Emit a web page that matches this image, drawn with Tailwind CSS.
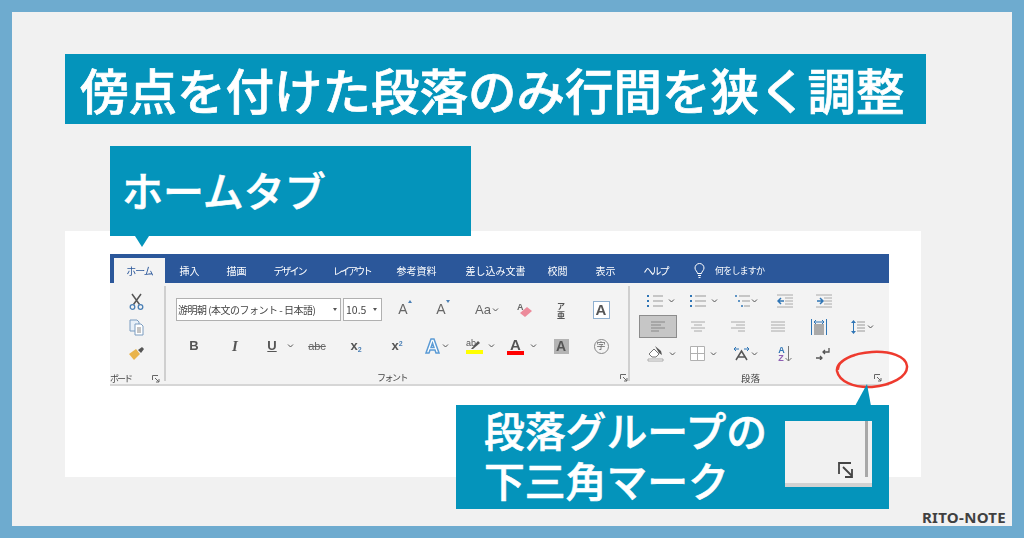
<!DOCTYPE html>
<html lang="ja">
<head>
  <meta charset="UTF-8">
  <title>段落グループの下三角マーク</title>
  <script src="https://cdn.jsdelivr.net/npm/@tailwindcss/browser@4"></script>
</head>
<body class="w-[1024px] h-[538px] overflow-hidden bg-[#6eabcf] p-3 font-['Noto_Sans_CJK_JP','Noto_Sans',sans-serif]">
  <div class="relative h-[514px] w-[1000px] bg-[#f1f1f1] pt-[42px]">

    <!-- Title -->
    <h1 class="ml-[53px] flex h-[70px] w-[861px] items-center bg-[#0494bb] pl-[15px] text-[48.5px] font-medium whitespace-nowrap text-white [-webkit-text-stroke:0.7px_#fff]">傍点を付けた段落のみ行間を狭く調整</h1>

    <!-- Home tab callout -->
    <div class="relative z-10 mt-[22px] ml-[98px] flex h-[90px] w-[361px] items-center bg-[#0494bb] pb-[2px] pl-[12px] text-[41px] font-medium text-white [-webkit-text-stroke:0.6px_#fff]">
      ホームタブ
      <div class="absolute top-[90px] left-[25px] h-0 w-0 border-t-[11px] border-r-[7px] border-l-[7px] border-t-[#0494bb] border-r-transparent border-l-transparent"></div>
    </div>

    <!-- White panel with ribbon -->
    <div class="relative -mt-[5px] ml-[53px] h-[246px] w-[856px] bg-white pt-[23px] pl-[45px]">
      <div class="w-[779px] blur-[0.35px]">
        <!-- Tabs -->
        <div class="flex h-[29px] items-end bg-[#2b579a] pl-[4px] text-[10px] text-white">
          <div class="flex h-[25px] w-[51px] items-center justify-center bg-[#f3f3f3] tracking-[-1px] text-[#2b579a]">ホーム</div>
          <div class="flex h-[25px] w-[49px] items-center justify-center">挿入</div>
          <div class="flex h-[25px] w-[45px] items-center justify-center">描画</div>
          <div class="flex h-[25px] w-[61px] items-center justify-center tracking-[-2px]">デザイン</div>
          <div class="flex h-[25px] w-[63px] items-center justify-center tracking-[-2.500px]">レイアウト</div>
          <div class="flex h-[25px] w-[67px] items-center justify-center">参考資料</div>
          <div class="flex h-[25px] w-[91px] items-center justify-center">差し込み文書</div>
          <div class="flex h-[25px] w-[33px] items-center justify-center">校閲</div>
          <div class="flex h-[25px] w-[63px] items-center justify-center">表示</div>
          <div class="flex h-[25px] w-[37px] items-center justify-center tracking-[-2px]">ヘルプ</div>
          <div class="flex h-[25px] w-[51px] items-center justify-center">
            <svg width="11" height="15" viewBox="0 0 11 15" fill="none" stroke="#fff" stroke-width="1"><path d="M3.5 10.5C3.5 8.5 1 7.5 1 5a4.5 4.5 0 0 1 9 0c0 2.500-2.500 3.500-2.500 5.500zM4 12.500h3M4.500 14.500h2"/></svg>
          </div>
          <div class="-ml-[10px] flex h-[25px] w-[49px] items-center text-[9px] tracking-[-0.800px] whitespace-nowrap">何をしますか</div>
        </div>

        <!-- Ribbon body -->
        <div class="flex h-[103px] border-b-2 border-[#d6d6d6] bg-[#f3f3f3] text-[#444]">

          <!-- Clipboard -->
          <div class="relative mt-[3px] h-[95px] w-[56px] border-r-2 border-[#cfcfcf]">
            <div class="ml-[15px] flex w-[22px] flex-col items-center pt-[2px]">
              <div class="flex h-[26px] items-center">
                <svg width="15" height="17" viewBox="0 0 15 17" fill="none"><path d="M3 1l7.500 10.500M12 1L4.500 11.500" stroke="#555" stroke-width="1.500"/><circle cx="3.500" cy="14" r="2.300" stroke="#4a7fb5" stroke-width="1.300"/><circle cx="11.500" cy="14" r="2.300" stroke="#4a7fb5" stroke-width="1.300"/></svg>
              </div>
              <div class="flex h-[26px] items-center">
                <svg width="15" height="17" viewBox="0 0 15 17"><path d="M1 1h7l2 2v9H1z" fill="#e8f0f8" stroke="#7a9cc0"/><path d="M6 5h6l2 2v9H6z" fill="#fff" stroke="#7a9cc0"/><path d="M8 9h4M8 11h4M8 13h4" stroke="#888"/></svg>
              </div>
              <div class="flex h-[26px] items-center">
                <svg width="17" height="15" viewBox="0 0 17 15"><path d="M1 8l7-5 4 5-6 6z" fill="#e9b44c"/><path d="M10 4l4-3 2 2-3 4z" fill="#555"/></svg>
              </div>
            </div>
            <div class="mt-[6px] flex items-center text-[9px] leading-[14px]">
              <span class="w-[42px] tracking-[-2px]">ボード</span>
              <svg width="8" height="8" viewBox="0 0 8 8" fill="none" stroke="#666"><path d="M.5 5V.5H6M3 3l4 4M7 4v3H4"/></svg>
            </div>
          </div>

          <!-- Font -->
          <div class="relative mt-[3px] h-[95px] w-[464px] border-r-2 border-[#cfcfcf] pl-[10px]">
            <div class="mt-[12px] flex h-[23px] items-center">
              <div class="flex h-[23px] w-[165px] items-center justify-between border border-[#b0b0b0] bg-white pr-[3px] pl-[1px] text-[10px] tracking-[-0.500px] whitespace-nowrap">游明朝 (本文のフォント - 日本語)<span class="h-0 w-0 border-t-[3px] border-r-[2.500px] border-l-[2.500px] border-t-[#555] border-r-transparent border-l-transparent"></span></div>
              <div class="ml-[2px] flex h-[23px] w-[39px] items-center justify-between border border-[#b0b0b0] bg-white px-[2px] pr-[4px] text-[10.500px]">10.5<span class="h-0 w-0 border-t-[3px] border-r-[2.500px] border-l-[2.500px] border-t-[#555] border-r-transparent border-l-transparent"></span></div>
              <div class="ml-[4px] flex w-[38px] items-start justify-center font-['Liberation_Sans'] text-[14px] text-[#666]">A<span class="mt-[1px] h-0 w-0 border-r-[2.500px] border-b-[3px] border-l-[2.500px] border-r-transparent border-b-[#4a7fb5] border-l-transparent"></span></div>
              <div class="flex w-[38px] items-start justify-center font-['Liberation_Sans'] text-[14px] text-[#666]">A<span class="mt-[1px] h-0 w-0 border-t-[3px] border-r-[2.500px] border-l-[2.500px] border-t-[#4a7fb5] border-r-transparent border-l-transparent"></span></div>
              <div class="flex w-[50px] items-center justify-center gap-[1px] font-['Liberation_Sans'] text-[13px] text-[#666]">Aa<svg width="7" height="4" viewBox="0 0 7 4" fill="none" stroke="#555"><path d="M1 .5l2.500 2.500L6 .5"/></svg></div>
              <div class="flex w-[26px] justify-center">
                <svg width="16" height="16" viewBox="0 0 16 16"><text x="0" y="8" font-size="9" font-weight="700" fill="#666" font-family="Liberation Sans">A</text><path d="M3 11l7-6 5 4-7 6z" fill="#ec8a9a"/></svg>
              </div>
              <div class="flex w-[46px] flex-col items-center text-[8px] leading-[9px] font-semibold text-[#555]"><span>ア</span><span>亜</span></div>
              <div class="flex w-[34px] justify-center">
                <div class="flex h-[18px] w-[17px] items-center justify-center border border-[#8fb0d0] bg-white font-['Liberation_Sans'] text-[15px] leading-none font-bold text-[#555]">A</div>
              </div>
            </div>
            <div class="mt-[14px] flex h-[22px] items-center font-['Liberation_Sans']">
              <div class="w-[36px] text-center text-[13px] font-bold text-[#555]">B</div>
              <div class="w-[46px] text-center font-['Liberation_Serif'] text-[15px] font-bold text-[#555] italic">I</div>
              <div class="flex w-[42px] items-center justify-center gap-[10px] pl-[3px] text-[13px] font-bold text-[#555]"><span class="underline">U</span><svg width="7" height="4" viewBox="0 0 7 4" fill="none" stroke="#555"><path d="M1 .5l2.500 2.500L6 .5"/></svg></div>
              <div class="w-[34px] text-center text-[11px] text-[#666] line-through">abc</div>
              <div class="w-[44px] text-center text-[13px] font-bold text-[#555]">x<span class="relative top-[2px] text-[7px] text-[#4a7fb5]">2</span></div>
              <div class="w-[38px] text-center text-[13px] font-bold text-[#555]">x<span class="relative -top-[4px] text-[7px] text-[#4a7fb5]">2</span></div>
              <div class="flex w-[42px] items-center justify-center gap-[2px]">
                <svg width="15" height="16" viewBox="0 0 15 16" fill="#fff" stroke="#5b9bd5" stroke-width="1.500"><path d="M1 15L6 1h3l5 14h-3l-1-3H5l-1 3zM6 9.500h3L7.500 5z"/></svg>
                <svg width="7" height="4" viewBox="0 0 7 4" fill="none" stroke="#555"><path d="M1 .5l2.500 2.500L6 .5"/></svg>
              </div>
              <div class="flex w-[42px] items-center justify-center gap-[5px] pl-[3px]">
                <div class="flex w-[17px] flex-col items-center">
                  <svg width="17" height="12" viewBox="0 0 17 12"><text x="0" y="8" font-size="9" fill="#555" font-family="Liberation Sans">ab</text><path d="M5 11l7-8 2 2-7 6z" fill="#555"/></svg>
                  <div class="h-[4px] w-[17px] bg-[#ffff00]"></div>
                </div>
                <svg width="7" height="4" viewBox="0 0 7 4" fill="none" stroke="#555"><path d="M1 .5l2.500 2.500L6 .5"/></svg>
              </div>
              <div class="flex w-[44px] items-center justify-center gap-[6px]">
                <div class="flex w-[17px] flex-col items-center text-[15px] leading-[13px] font-bold text-[#555]">A<div class="h-[4px] w-[17px] bg-[#ff0000]"></div></div>
                <svg width="7" height="4" viewBox="0 0 7 4" fill="none" stroke="#555"><path d="M1 .5l2.500 2.500L6 .5"/></svg>
              </div>
              <div class="flex w-[34px] justify-center"><div class="flex h-[15px] w-[15px] items-center justify-center bg-[#b4b4b4] text-[14px] font-bold text-[#555]">A</div></div>
              <div class="flex w-[46px] justify-center"><div class="flex h-[15px] w-[15px] items-center justify-center rounded-full border border-[#888] font-['Noto_Sans_CJK_JP'] text-[9px] text-[#666]">字</div></div>
            </div>
            <div class="mt-[14px] flex items-center text-[9px] leading-[14px]">
              <span class="ml-[201px] w-[244px] tracking-[-1.500px]">フォント</span>
              <svg width="8" height="8" viewBox="0 0 8 8" fill="none" stroke="#666"><path d="M.5 5V.5H6M3 3l4 4M7 4v3H4"/></svg>
            </div>
          </div>

          <!-- Paragraph -->
          <div class="w-[258px] pt-[5px] pl-[9px]">
            <div class="flex h-[25px] items-center">
              <div class="flex w-[42px] items-center justify-center gap-[5px] pl-[2px]">
                <svg width="16" height="14" viewBox="0 0 16 14" fill="none" stroke="#999"><path d="M6 2h10M6 7h10M6 12h10"/><path d="M0 2h2M0 7h2M0 12h2" stroke="#2f75b5" stroke-width="2"/></svg>
                <svg width="7" height="4" viewBox="0 0 7 4" fill="none" stroke="#555"><path d="M1 .5l2.500 2.500L6 .5"/></svg>
              </div>
              <div class="flex w-[42px] items-center justify-center gap-[5px] pl-[3px]">
                <svg width="16" height="14" viewBox="0 0 16 14" fill="none" stroke="#999"><path d="M5 2h11M5 7h11M5 12h11"/><path d="M1 1v2M1 6v2M1 11v2" stroke="#2f75b5" stroke-width="2"/></svg>
                <svg width="7" height="4" viewBox="0 0 7 4" fill="none" stroke="#555"><path d="M1 .5l2.500 2.500L6 .5"/></svg>
              </div>
              <div class="flex w-[44px] items-center justify-center gap-[1px] pl-[3px]">
                <svg width="15" height="14" viewBox="0 0 15 14" fill="none" stroke="#999"><path d="M4 2h11M7 7h8M9 12h6"/><path d="M1 1v2M4 6v2M7 11v2" stroke="#2f75b5" stroke-width="1.500"/></svg>
                <svg width="7" height="4" viewBox="0 0 7 4" fill="none" stroke="#555"><path d="M1 .5l2.500 2.500L6 .5"/></svg>
              </div>
              <div class="flex w-[36px] justify-center">
                <svg width="16" height="14" viewBox="0 0 16 14" fill="none" stroke="#aaa"><path d="M0 1h16M8 4h8M8 7h8M8 10h8M0 13h16"/><path d="M7 7H1M4 4L1 7l3 3" stroke="#2f75b5" stroke-width="1.500"/></svg>
              </div>
              <div class="flex w-[40px] justify-center pl-[1px]">
                <svg width="16" height="14" viewBox="0 0 16 14" fill="none" stroke="#aaa"><path d="M0 1h16M8 4h8M8 7h8M8 10h8M0 13h16"/><path d="M1 7h6M4 4l3 3-3 3" stroke="#2f75b5" stroke-width="1.500"/></svg>
              </div>
            </div>
            <div class="flex h-[27px] items-center">
              <div class="flex h-[23px] w-[38px] items-center justify-center border border-[#8c8c8c] bg-[#c6c6c6]">
                <svg width="14" height="11" viewBox="0 0 14 11" fill="none" stroke="#888"><path d="M0 1h14M0 4h10M0 7h14M0 10h8"/></svg>
              </div>
              <div class="flex w-[42px] justify-center">
                <svg width="14" height="11" viewBox="0 0 14 11" fill="none" stroke="#aaa"><path d="M0 1h14M3 4h8M0 7h14M3 10h8"/></svg>
              </div>
              <div class="flex w-[38px] justify-center">
                <svg width="14" height="11" viewBox="0 0 14 11" fill="none" stroke="#aaa"><path d="M0 1h14M5 4h9M0 7h14M7 10h7"/></svg>
              </div>
              <div class="flex w-[42px] justify-center">
                <svg width="14" height="11" viewBox="0 0 14 11" fill="none" stroke="#aaa"><path d="M0 1h14M0 4h14M0 7h14M0 10h14"/></svg>
              </div>
              <div class="flex w-[40px] justify-center">
                <svg width="16" height="16" viewBox="0 0 16 16" fill="none"><path d="M3 5h10v11H3z" fill="#aaa"/><path d="M.5 0v16M15.500 0v16" stroke="#2f75b5"/><path d="M3 3h10M5 1L3 3l2 2M11 1l2 2-2 2" stroke="#2f75b5"/></svg>
              </div>
              <div class="flex w-[38px] items-center justify-center gap-[2px] pl-[9px]">
                <svg width="14" height="16" viewBox="0 0 14 16" fill="none"><path d="M2.500 2v12" stroke="#2f75b5"/><path d="M0 4l2.500-3L5 4zM0 12l2.500 3L5 12z" fill="#2f75b5"/><path d="M6 3h8M6 6h8M6 9h8M6 12h8" stroke="#999"/></svg>
                <svg width="7" height="4" viewBox="0 0 7 4" fill="none" stroke="#555"><path d="M1 .5l2.500 2.500L6 .5"/></svg>
              </div>
            </div>
            <div class="mt-[1px] flex h-[25px] items-center">
              <div class="flex w-[42px] items-center justify-center gap-[5px] pl-[3px]">
                <svg width="17" height="17" viewBox="0 0 17 17"><path d="M2 9l5-5 5 5-3 3H5z" fill="#fff" stroke="#777"/><path d="M8 1l6 5 1 4-3-2z" fill="#555"/><path d="M1 14h15v2H1z" fill="#fff" stroke="#aaa"/></svg>
                <svg width="7" height="4" viewBox="0 0 7 4" fill="none" stroke="#555"><path d="M1 .5l2.500 2.500L6 .5"/></svg>
              </div>
              <div class="flex w-[42px] items-center justify-center gap-[5px] pl-[3px]">
                <svg width="15" height="15" viewBox="0 0 15 15" fill="#fff" stroke="#b0b0b0"><path d="M.5.5h14v14H.5zM7.500.5v14M.5 7.500h14"/></svg>
                <svg width="7" height="4" viewBox="0 0 7 4" fill="none" stroke="#555"><path d="M1 .5l2.500 2.500L6 .5"/></svg>
              </div>
              <div class="flex w-[44px] items-center justify-center gap-[1px]">
                <svg width="17" height="15" viewBox="0 0 17 15" fill="none"><path d="M3 14L8.500 5 14 14M5 11h7" stroke="#555" stroke-width="1.500"/><path d="M1 3h5M3 1L1 3l2 2M11 3h5M14 1l2 2-2 2" stroke="#2f75b5"/></svg>
                <svg width="7" height="4" viewBox="0 0 7 4" fill="none" stroke="#555"><path d="M1 .5l2.500 2.500L6 .5"/></svg>
              </div>
              <div class="flex w-[36px] justify-center">
                <div class="flex items-center">
                  <div class="flex flex-col font-['Liberation_Sans'] text-[9px] leading-[8px] font-bold"><span class="text-[#2f75b5]">A</span><span class="text-[#8e5fb3]">Z</span></div>
                  <svg width="7" height="16" viewBox="0 0 7 16" fill="none" stroke="#777"><path d="M3.500 0v15M.5 12l3 3 3-3"/></svg>
                </div>
              </div>
              <div class="flex w-[40px] justify-center">
                <svg width="14" height="12" viewBox="0 0 14 12" fill="none" stroke="#555" stroke-width="1.300"><path d="M13 0v4H7M9 2L7 4l2 2M0 10h6M4 8l2 2-2 2"/></svg>
              </div>
            </div>
            <div class="mt-[5px] flex items-center text-[9.500px] leading-[14px]">
              <span class="ml-[102px] w-[133px]">段落</span>
              <svg width="8" height="8" viewBox="0 0 8 8" fill="none" stroke="#666"><path d="M.5 5V.5H6M3 3l4 4M7 4v3H4"/></svg>
            </div>
          </div>
        </div>
      </div>

      <!-- Red hand-drawn ellipse -->
      <svg class="absolute top-[119px] left-[770px]" width="74" height="40" viewBox="0 0 74 40" fill="none">
        <path d="M3 20C2 11 18 3 37 2c18-1 34 4 35 14 1 11-16 19-35 21C18 38 4 31 2 21 1 14 10 8 20 5" stroke="#ee3a2e" stroke-width="2.500"/>
      </svg>

      <!-- Dialog launcher callout -->
      <div class="absolute top-[174px] left-[391px] h-[104px] w-[433px] bg-[#0494bb]">
        <svg class="absolute -top-[21px] left-[399px]" width="16" height="22" viewBox="0 0 16 22"><path d="M12 0L0 22h16z" fill="#0494bb"/></svg>
        <div class="absolute top-0 left-[28px] text-[40.800px] leading-[50px] font-medium whitespace-nowrap text-white [-webkit-text-stroke:0.6px_#fff]">段落グループの<br>下三角マーク</div>
        <div class="absolute top-[16px] left-[329px] h-[66px] w-[87px] border-b-[4px] border-[#d2d2d2] bg-[#f1f1f1]">
          <div class="absolute top-0 left-[80px] h-[56px] w-[3px] bg-[#a8a8a8]"></div>
          <svg class="absolute top-[41px] left-[53px]" width="16" height="16" viewBox="0 0 16 16" fill="none" stroke="#444" stroke-width="1.800"><path d="M1 12V1h12M5 5l9 9M14 7v8H7"/></svg>
        </div>
      </div>
    </div>

    <div class="absolute right-[6px] bottom-0 font-['Noto_Sans','Liberation_Sans',sans-serif] text-[15px] leading-[18px] font-bold tracking-[0.3px] text-[#404040]">RITO-NOTE</div>
  </div>
</body>
</html>
